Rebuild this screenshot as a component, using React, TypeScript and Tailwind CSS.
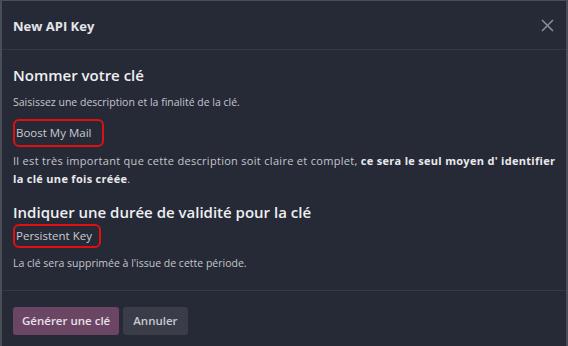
import React from "react";

export default function App() {
  return (
    <div className="w-[568px] h-[346px] bg-[#262a36] border-x-2 border-t border-[#4b4d58] text-[#d8d9dc] flex flex-col overflow-hidden" style={{ fontFamily: '"Open Sans", "Noto Sans", sans-serif' }}>
      <div className="h-[49px] flex items-center justify-between pl-[11px] pr-[12px] pt-[4px] border-b border-[#363a47] shrink-0">
        <div className="text-[13px] font-bold text-[#e4e5e8]">New API Key</div>
        <svg width="13" height="13" viewBox="0 0 13 13" className="text-[#8d909a] -mt-[4px]">
          <path d="M1 1L12 12M12 1L1 12" stroke="currentColor" strokeWidth="1.5" />
        </svg>
      </div>
      <div className="flex-1 pl-[11px] pr-[8px] pt-[15px]">
        <div className="text-[15px] font-semibold text-[#eeeff1] leading-[20px]">Nommer votre clé</div>
        <div className="text-[10.5px] text-[#c4c6cc] mt-[9px] leading-[16px]">Saisissez une description et la finalité de la clé.</div>
        <div className="mt-[9px] w-[91px] h-[28px] border-2 border-[#e01010] rounded-[6px] flex items-center pl-[1px] text-[11.5px] text-[#c8cad0]">Boost My Mail</div>
        <div className="text-[11px] tracking-[0.3px] text-[#c4c6cc] mt-[5px] leading-[18px] whitespace-nowrap">
          Il est très important que cette description soit claire et complet, <b className="text-[#e8e9ec]">ce sera le seul moyen d' identifier<br />la clé une fois créée</b>.
        </div>
        <div className="text-[15px] font-semibold text-[#eeeff1] leading-[20px] mt-[14px]">Indiquer une durée de validité pour la clé</div>
        <div className="mt-[2px] w-[88px] h-[24px] border-2 border-[#e01010] rounded-[6px] flex items-center pl-[1px] text-[11.5px] text-[#c8cad0]">Persistent Key</div>
        <div className="text-[10.5px] text-[#c4c6cc] mt-[7px] leading-[16px]">La clé sera supprimée à l'issue de cette période.</div>
      </div>
      <div className="h-[56px] border-t border-[#363a47] flex items-start gap-[4px] pl-[11px] pt-[16px] shrink-0">
        <button className="h-[28px] px-[9px] rounded-[3px] bg-[#6a4564] text-[11.5px] font-semibold text-[#e6e0e6]">Générer une clé</button>
        <button className="h-[28px] px-[10px] rounded-[3px] bg-[#3a3c48] text-[11.5px] font-semibold text-[#c8cad0]">Annuler</button>
      </div>
    </div>
  );
}
